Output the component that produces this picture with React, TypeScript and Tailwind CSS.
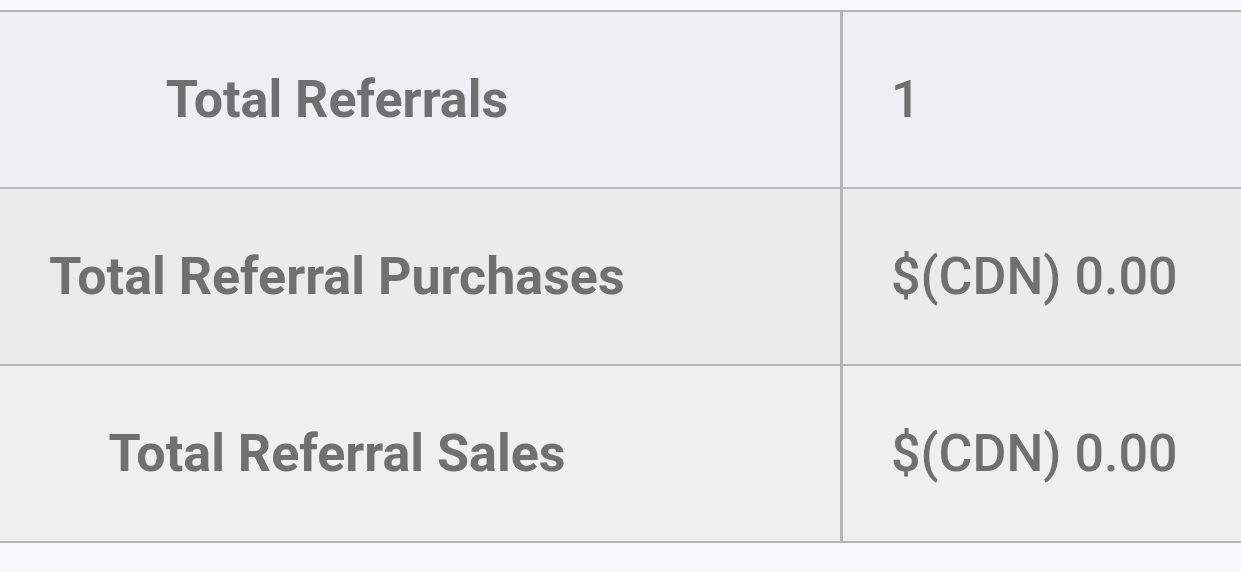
import React from "react";

const rows = [
  { label: "Total Referrals", value: "1", bg: "bg-[#efeff1]" },
  { label: "Total Referral Purchases", value: "$(CDN) 0.00", bg: "bg-[#ebebeb]" },
  { label: "Total Referral Sales", value: "$(CDN) 0.00", bg: "bg-[#efeff0]" },
];

export default function App() {
  return (
    <div
      className="w-[1241px] h-[572px] bg-[#f8f8fa] pt-[10px] overflow-hidden"
      style={{ fontFamily: "Roboto, 'Noto Sans', sans-serif" }}
    >
      <div className="border-t-2 border-b-2 border-[#b5b5b5]">
        {rows.map((r, i) => (
          <div
            key={r.label}
            className={`flex box-content h-[175px] ${r.bg} ${i > 0 ? "border-t-2 border-[#b5b5b5]" : ""}`}
          >
            <div className="w-[843px] shrink-0 border-r-[3px] border-[#b5b5b5] flex items-center justify-center pr-[166px]">
              <span className="text-[52px] font-bold text-[#707070] whitespace-nowrap">{r.label}</span>
            </div>
            <div className="flex-1 flex items-center pl-[48px]">
              <span className="text-[52px] font-medium text-[#707070] whitespace-nowrap">{r.value}</span>
            </div>
          </div>
        ))}
      </div>
    </div>
  );
}
